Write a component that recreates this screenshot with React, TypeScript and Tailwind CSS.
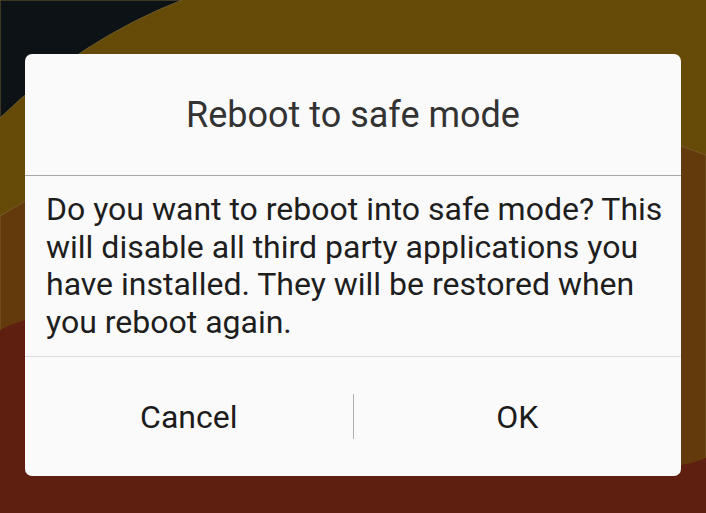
export default function App() {
  return (
    <div className="relative w-[706px] h-[513px] overflow-hidden bg-[#654a08] font-['Roboto',sans-serif]">
      {/* wallpaper */}
      <svg className="absolute inset-0" width="706" height="513" viewBox="0 0 706 513">
        <path d="M0,216 Q330,10 706,155 L706,513 L0,513 Z" fill="#623a0c" stroke="#7a5a2a" strokeWidth="1" />
        <path d="M0,330 C150,250 560,520 706,458 L706,513 L0,513 Z" fill="#5e1f10" />
        <path d="M0,0 L182,0 Q80,40 0,118 Z" fill="#0d1216" stroke="#6e5a2c" strokeWidth="1" />
      </svg>

      <div className="relative px-[25px] pt-[54px]">
        <div className="w-[656px] h-[422px] rounded-[7px] bg-[#fafafa] flex flex-col">
          <div className="h-[122px] flex items-center justify-center border-b border-[#a8a8a8] text-[36px] text-[#333333]">
            Reboot to safe mode
          </div>
          <div className="h-[181px] pl-[21px] pr-[12px] pt-[15px] border-b border-[#dcdcdc] text-[32px] leading-[37.5px] text-[#1e1e1e]">
            Do you want to reboot into safe mode? This will disable all third party applications you have installed. They will be restored when you reboot again.
          </div>
          <div className="flex-1 flex items-center text-[32px] text-[#1c1c1c]">
            <div className="flex-1 text-center">Cancel</div>
            <div className="w-px h-[45px] bg-[#b0b0b0]" />
            <div className="flex-1 text-center">OK</div>
          </div>
        </div>
      </div>
    </div>
  );
}
